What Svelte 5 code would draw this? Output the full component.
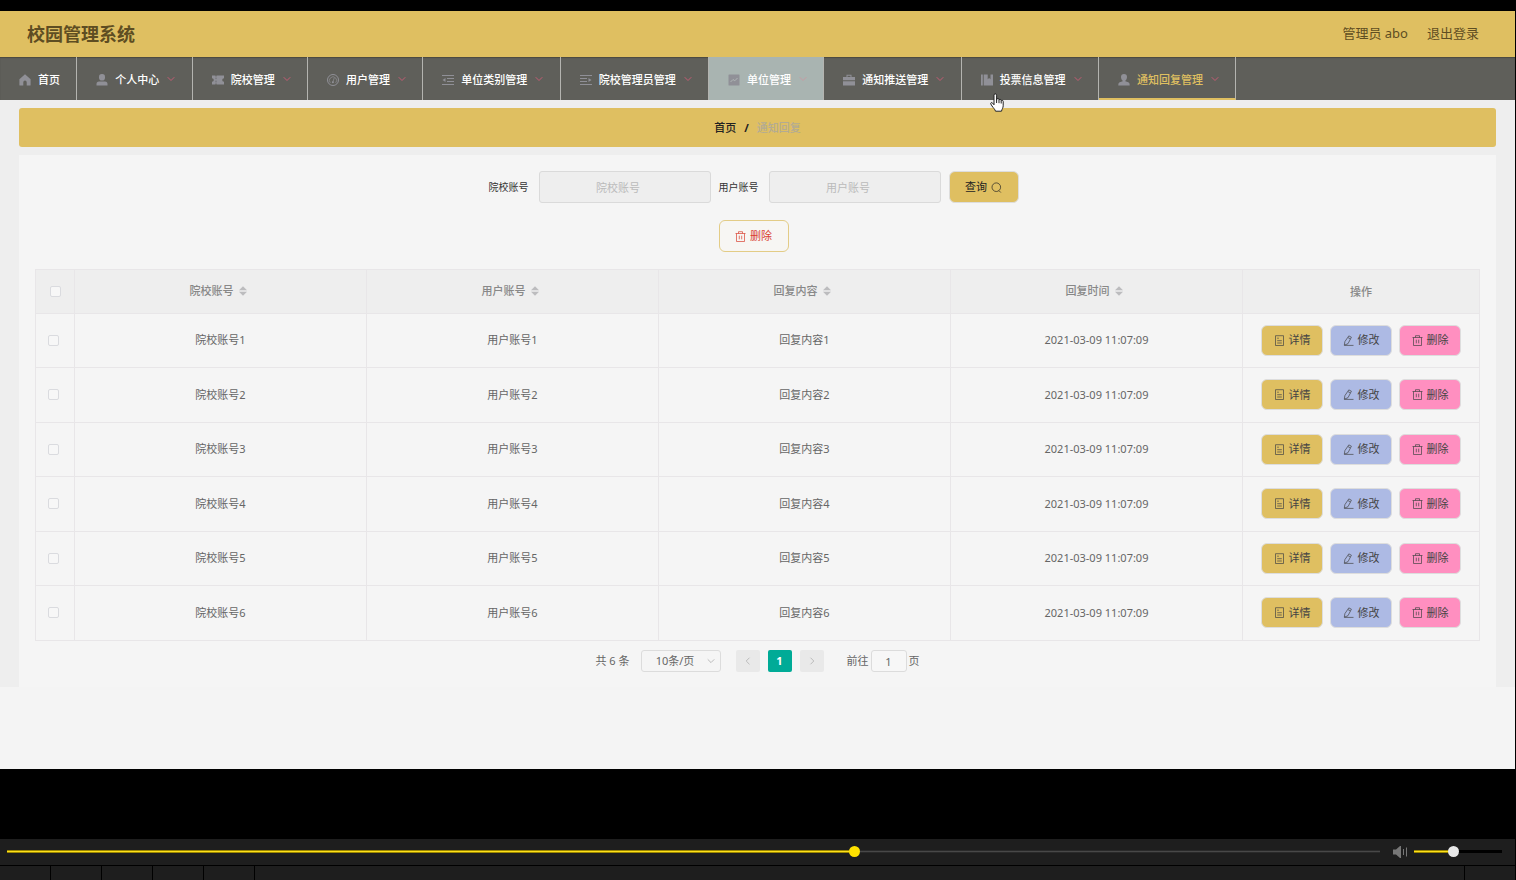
<script>
    const navItems = [
        { label: '首页', icon: 'home' },
        { label: '个人中心', icon: 'user', sub: true },
        { label: '院校管理', icon: 'ticket', sub: true },
        { label: '用户管理', icon: 'gauge', sub: true },
        { label: '单位类别管理', icon: 'fold', sub: true },
        { label: '院校管理员管理', icon: 'unfold', sub: true },
        { label: '单位管理', icon: 'chart', sub: true, hover: true },
        { label: '通知推送管理', icon: 'case', sub: true },
        { label: '投票信息管理', icon: 'book', sub: true },
        { label: '通知回复管理', icon: 'person', sub: true, active: true }
    ];

    const columns = ['院校账号', '用户账号', '回复内容', '回复时间'];

    let rows = $state(
        [1, 2, 3, 4, 5, 6].map((n) => ({
            id: n,
            school: '院校账号' + n,
            user: '用户账号' + n,
            content: '回复内容' + n,
            time: '2021-03-09 11:07:09',
            checked: false
        }))
    );

    let school = $state('');
    let user = $state('');
    let pageSize = $state('10');
    let page = $state('1');
    let progress = $state(61.8);
    let volume = $state(44);

    let allChecked = $derived(rows.length > 0 && rows.every((r) => r.checked));

    function toggleAll(e) {
        const value = e.currentTarget.checked;
        rows.forEach((r) => (r.checked = value));
    }
</script>

{#snippet navIcon(name)}
    <svg class="nav-icon" viewBox="0 0 12 12" aria-hidden="true">
        {#if name === 'home'}
            <path d="M6 .3 11.6 5.2V11a.6.6 0 0 1-.6.6H7.7V8.2a1.7 1.7 0 0 0-3.4 0v3.4H1a.6.6 0 0 1-.6-.6V5.2z" />
        {:else if name === 'user'}
            <rect x="3" y="0" width="6" height="6.6" rx="2.8" />
            <path d="M.5 11.5V10A2.5 2.5 0 0 1 3 7.5h6A2.5 2.5 0 0 1 11.5 10v1.5z" />
        {:else if name === 'ticket'}
            <path d="M0 1.500h3.500v1h1v-1H12v2.700a1.800 1.800 0 0 0 0 3.600v2.700H4.500v-1h-1v1H0V7.800a1.800 1.800 0 0 0 0-3.600z" />
            <path class="cut" d="M4 3.500v1.600M4 6.600v1.800" />
        {:else if name === 'gauge'}
            <circle class="line" cx="6" cy="6" r="5.500" />
            <path class="line thin" d="M3.300 8.800a3.600 3.600 0 1 1 5.400 0M7.200 4 5.800 8.300" />
            <circle cx="5.900" cy="8.300" r="1" />
        {:else if name === 'fold'}
            <path class="line" d="M0 1.500h12M5 4.500h7M5 7.500h7M0 10.500h12" />
            <path d="M.5 6 3.500 4v4z" />
        {:else if name === 'unfold'}
            <path class="line" d="M0 1.500h12M0 4.500h7M0 7.500h7M0 10.500h12" />
            <path d="M11.500 6 8.500 4v4z" />
        {:else if name === 'chart'}
            <rect x=".5" y=".5" width="11" height="11" rx=".5" />
            <path class="cut light" d="M2.500 8 5 5.500l1.800 1.300L9.500 4" />
        {:else if name === 'case'}
            <path d="M0 3h3.500V.8h5V3H12v3.300H0zM4.500 1.800V3h3V1.800zM0 7.200h12v4.300H0z" fill-rule="evenodd" />
        {:else if name === 'book'}
            <path d="M0 .5h1.800v11H0zM2.700.5h4v4.800l1.400-1.200 1.400 1.200V.5H12v11H2.700z" />
        {:else}
            <path d="M6 0a3 3 0 0 1 3 3.100c0 1.500-.7 3-1.700 3.600v.6l3 1c1 .4 1.400 1.400 1.400 3.200H.3c0-1.800.4-2.800 1.400-3.200l3-1v-.6C3.700 6.100 3 4.600 3 3.100A3 3 0 0 1 6 0z" />
        {/if}
    </svg>
{/snippet}

{#snippet icon(name)}
    <svg class="icon" viewBox="0 0 11 11" aria-hidden="true">
        {#if name === 'search'}
            <circle cx="5.300" cy="5.200" r="4.300" />
            <path d="M8 8.700 9.800 10.500" />
        {:else if name === 'trash'}
            <path d="M.5 2.500h10M3.500 2.500V.7h4v1.800M1.500 2.500v8h8v-8M4.300 4.700v3.600M6.700 4.700v3.600" />
        {:else if name === 'doc'}
            <path d="M1.500.7h8v9.800h-8zM3.200 3.200h1.600M3.200 5.700h4.600M3.200 8h4.600" />
        {:else}
            <path d="M5.800.9 8.400 2.200 5 8.700 1.300 10.200l.6-3.600zM5 2.600l2.400 1.300M1.300 10.400h9.200" />
        {/if}
    </svg>
{/snippet}

<div class="screen">
    <header class="topbar">
        <h1>校园管理系统</h1>
        <div class="account">
            <span>管理员 abo</span>
            <a href="#logout">退出登录</a>
        </div>
    </header>

    <nav>
        <ul>
            {#each navItems as item}
                <li class:hover={item.hover} class:active={item.active}>
                    <a href="#menu">
                        {@render navIcon(item.icon)}
                        <span>{item.label}</span>
                        {#if item.sub}
                            <svg class="arrow" viewBox="0 0 8 8" aria-hidden="true"><path d="M.7 1.200 4 4.500l3.300-3.300" /></svg>
                        {/if}
                    </a>
                </li>
            {/each}
        </ul>
        <svg class="pointer" viewBox="0 0 14 20" aria-hidden="true">
            <path d="M4 11.800V2.200a1.300 1.300 0 0 1 2.600 0v5l.2-.8a1.100 1.100 0 0 1 2.200.3v.7a1.100 1.100 0 0 1 2.200.2v.7a1 1 0 0 1 2 .2v4.300c0 2-1.200 3-1.700 5.400H5.500c-.5-2-2.400-3.400-3.500-5.200L.8 11c-.5-1 .7-1.900 1.600-1.100z" />
            <path d="M6.600 7v3M9 7.500v2.700M11.200 8.300v2.200" />
        </svg>
    </nav>

    <main>
        <div class="breadcrumb">
            <a href="#home">首页</a>
            <b>/</b>
            <span>通知回复</span>
        </div>

        <section class="card">
            <form onsubmit={(e) => e.preventDefault()}>
                <div class="form-row">
                    <label for="school">院校账号</label>
                    <input id="school" type="text" placeholder="院校账号" bind:value={school} />
                    <label for="user">用户账号</label>
                    <input id="user" type="text" placeholder="用户账号" bind:value={user} />
                    <button class="btn search">查询 {@render icon('search')}</button>
                </div>
                <div class="form-row">
                    <button type="button" class="btn remove">{@render icon('trash')} 删除</button>
                </div>
            </form>

            <table>
                <thead>
                    <tr>
                        <th class="check"><input type="checkbox" aria-label="全选" checked={allChecked} onchange={toggleAll} /></th>
                        {#each columns as col}
                            <th>
                                <span class="sortable">
                                    {col}
                                    <svg class="sort" viewBox="0 0 8 10" aria-hidden="true"><path d="M0 4.300 4 .3l4 4zM0 5.700h8l-4 4z" /></svg>
                                </span>
                            </th>
                        {/each}
                        <th class="ops">操作</th>
                    </tr>
                </thead>
                <tbody>
                    {#each rows as row (row.id)}
                        <tr>
                            <td class="check"><input type="checkbox" aria-label={row.school} bind:checked={row.checked} /></td>
                            <td>{row.school}</td>
                            <td>{row.user}</td>
                            <td>{row.content}</td>
                            <td>{row.time}</td>
                            <td>
                                <div class="actions">
                                    <button class="btn detail">{@render icon('doc')} 详情</button>
                                    <button class="btn edit">{@render icon('edit')} 修改</button>
                                    <button class="btn delete">{@render icon('trash')} 删除</button>
                                </div>
                            </td>
                        </tr>
                    {/each}
                </tbody>
            </table>

            <div class="pagination">
                <span>共 6 条</span>
                <div class="size">
                    <select aria-label="每页条数" bind:value={pageSize}>
                        <option value="10">10条/页</option>
                    </select>
                    <svg viewBox="0 0 8 8" aria-hidden="true"><path d="M.7 2.300 4 5.600l3.300-3.300" /></svg>
                </div>
                <div class="pager">
                    <button disabled aria-label="上一页"><svg viewBox="0 0 8 8" aria-hidden="true"><path d="M5.500.7 2.200 4l3.300 3.300" /></svg></button>
                    <button class="current">1</button>
                    <button disabled aria-label="下一页"><svg viewBox="0 0 8 8" aria-hidden="true"><path d="M2.500.7 5.800 4 2.500 7.300" /></svg></button>
                </div>
                <label class="jump">前往 <input type="text" bind:value={page} /> 页</label>
            </div>
        </section>
    </main>

    <footer class="player">
        <div class="controls">
            <input class="seek" type="range" min="0" max="100" step="0.1" aria-label="播放进度" bind:value={progress} style="--value: {progress}%" />
            <svg class="speaker" viewBox="0 0 16 14" aria-hidden="true">
                <path d="M1 4.500h3L8 1h1v12H8L4 9.500H1z" />
                <path class="wave" d="M11.500 4v6M14.500 2.500v9" />
            </svg>
            <input class="volume" type="range" min="0" max="100" aria-label="音量" bind:value={volume} style="--value: {volume}%" />
        </div>
        <div class="strip">
            <i></i><i></i><i></i><i></i><i></i>
            <i class="last"></i>
        </div>
    </footer>
</div>

<style>
    :global(body) {
        margin: 0;
        background: #000;
    }

    .screen {
        --gold: #dfbf61;
        display: flex;
        flex-direction: column;
        min-height: 100vh;
        box-sizing: border-box;
        padding: 11px 1px 0 0;
        background: #000;
        color: #666;
        font-family: 'Noto Sans', 'Noto Sans CJK SC', sans-serif;
        font-size: 11px;
        line-height: 16px;
    }

    a {
        color: inherit;
        text-decoration: none;
    }

    button,
    input,
    select {
        box-sizing: border-box;
        margin: 0;
        font: inherit;
        color: inherit;
    }

    svg {
        flex: none;
    }

    .topbar {
        display: flex;
        align-items: center;
        justify-content: space-between;
        height: 46px;
        padding: 0 36px 0 27px;
        background: var(--gold);
        color: #5e4d22;
    }

    h1 {
        margin: 0;
        font-size: 18px;
        line-height: 24px;
        font-weight: 700;
    }

    .account {
        display: flex;
        gap: 19px;
        padding-bottom: 2px;
        font-size: 13px;
        line-height: 20px;
    }

    nav {
        position: relative;
        background: #5f5f5a;
        box-shadow: inset 0 1px 1px #4c4a40;
    }

    ul {
        display: flex;
        width: 81.6%;
        margin: 0;
        padding: 0;
        list-style: none;
    }

    li {
        flex: 1 0 auto;
        box-sizing: border-box;
        height: 43px;
        border-right: 1px solid #b4b4b0;
        color: #fff;
    }

    li.hover {
        background: #a9b4b1;
    }

    li.active {
        border-bottom: 2px solid var(--gold);
        color: var(--gold);
    }

    li a {
        display: flex;
        align-items: center;
        height: 43px;
        padding: 3px 16px 0 19px;
        box-sizing: border-box;
        white-space: nowrap;
        font-weight: 500;
    }

    .nav-icon {
        width: 12px;
        height: 12px;
        margin-right: 7px;
        fill: #909097;
    }

    .nav-icon .line {
        fill: none;
        stroke: #909097;
    }

    .nav-icon .thin {
        stroke-width: 0.7;
    }

    .nav-icon .cut {
        fill: none;
        stroke: #6d6d70;
    }

    .nav-icon .light {
        stroke: #b0b6b6;
    }

    .arrow {
        width: 8px;
        height: 8px;
        margin-left: 8px;
        fill: none;
        stroke: #c45c74;
    }

    .hover .arrow {
        stroke: #c79aa2;
    }

    .pointer {
        position: absolute;
        left: 990px;
        top: 36px;
        width: 14px;
        height: 20px;
        fill: #fff;
        stroke: #222;
    }

    main {
        padding: 8px 19px 82px;
        background: linear-gradient(#eee 587px, #f4f4f4 587px);
    }

    .breadcrumb {
        display: flex;
        justify-content: center;
        align-items: center;
        gap: 8px;
        height: 39px;
        border-radius: 3px;
        background: var(--gold);
        color: #222;
        font-weight: 500;
    }

    .breadcrumb span {
        color: #b3ab93;
    }

    .card {
        margin-top: 8px;
        padding: 16px 16px 15px;
        background: #f5f5f5;
    }

    form {
        display: flex;
        flex-direction: column;
        gap: 17px;
        padding: 0 8px 17px 0;
    }

    .form-row {
        display: flex;
        align-items: center;
        justify-content: center;
        height: 32px;
    }

    .form-row label {
        margin-right: 10px;
        font-size: 10px;
        color: #333;
    }

    .form-row input {
        width: 172px;
        height: 32px;
        margin-right: 8px;
        padding: 0 13px 0 0;
        border: 1px solid #dadada;
        border-radius: 3px;
        background: #eee;
        text-align: center;
    }

    .form-row input::placeholder {
        color: #bbb;
    }

    .btn {
        display: flex;
        align-items: center;
        justify-content: center;
        gap: 4px;
        width: 62px;
        height: 31px;
        padding: 0;
        border: 1px solid #ddd;
        border-radius: 6px;
        color: #444;
        cursor: pointer;
    }

    .icon {
        width: 11px;
        height: 11px;
        fill: none;
        stroke: currentColor;
        stroke-width: 0.7;
    }

    .search,
    .remove {
        width: 70px;
        height: 32px;
    }

    .search {
        background: var(--gold);
        color: #222;
    }

    .remove {
        border-color: #e3cc86;
        background: #f7f6f3;
        color: #d9402f;
    }

    .detail {
        background: var(--gold);
    }

    .edit {
        background: #adbae4;
    }

    .delete {
        background: #ff8fc0;
    }

    table {
        width: 100%;
        table-layout: fixed;
        border-collapse: collapse;
        text-align: center;
    }

    th,
    td {
        box-sizing: border-box;
        padding: 0;
        border: 1px solid #e8e6e8;
    }

    th {
        height: 44px;
        background: #eee;
        color: #888;
        font-weight: 500;
    }

    td {
        height: 54px;
        padding-bottom: 1px;
    }

    tr:nth-child(even) td {
        height: 55px;
    }

    .check {
        width: 39px;
    }

    td.check {
        padding-right: 3px;
    }

    .ops {
        width: 237px;
    }

    .sortable {
        display: inline-flex;
        align-items: center;
        gap: 5px;
        padding: 0 5px 2px 0;
    }

    .sort {
        width: 8px;
        height: 10px;
        fill: #bcbcbe;
    }

    .check input {
        display: block;
        width: 11px;
        height: 11px;
        margin: 0 auto;
        appearance: none;
        border: 1px solid #dadbdf;
        border-radius: 2px;
        background: #f7f7f7;
    }

    .check input:checked {
        background: #00ab97;
    }

    .actions {
        display: flex;
        justify-content: center;
        gap: 7px;
    }

    .pagination {
        display: flex;
        align-items: center;
        justify-content: center;
        height: 22px;
        margin-top: 9px;
    }

    .pagination svg {
        width: 8px;
        height: 8px;
        fill: none;
        stroke: #bbb;
    }

    .size {
        position: relative;
        margin: 0 15px 0 11px;
    }

    .size select {
        display: block;
        width: 80px;
        height: 22px;
        padding: 0 11px 0 0;
        appearance: none;
        border: 1px solid #dcdcdc;
        border-radius: 3px;
        background: #f5f5f5;
        text-align: center;
        text-align-last: center;
    }

    .size svg {
        position: absolute;
        right: 6px;
        top: 7px;
        pointer-events: none;
    }

    .pager {
        display: flex;
        gap: 8px;
    }

    .pager button {
        display: flex;
        align-items: center;
        justify-content: center;
        width: 24px;
        height: 22px;
        padding: 0;
        border: 0;
        border-radius: 2px;
        background: #e9e9e9;
    }

    .pager .current {
        background: #00ab97;
        color: #fff;
        font-weight: 700;
    }

    .jump {
        display: flex;
        align-items: center;
        gap: 2px;
        margin-left: 23px;
    }

    .jump input {
        width: 36px;
        height: 22px;
        padding: 0;
        border: 1px solid #dcdcdc;
        border-radius: 3px;
        background: #f7f7f7;
        text-align: center;
    }

    .player {
        margin-top: auto;
        background: #1e1e1e;
    }

    .controls {
        display: flex;
        align-items: center;
        height: 26px;
        box-sizing: border-box;
        padding: 0 13px 1px 7px;
    }

    input[type='range'] {
        height: 11px;
        appearance: none;
        background: none;
    }

    input[type='range']::-webkit-slider-runnable-track {
        height: 3px;
        background:
            linear-gradient(#9c8700 1px, #ffe11a 1px 2px, #9c8700 2px) 0 0 / var(--value) 100% no-repeat,
            var(--rest);
    }

    input[type='range']::-webkit-slider-thumb {
        width: 11px;
        height: 11px;
        margin-top: -4px;
        appearance: none;
        border-radius: 50%;
        background: var(--thumb);
    }

    .seek {
        --rest: linear-gradient(#2a2a2a 1px, #484848 1px 2px, #2a2a2a 2px);
        --thumb: #ffe100;
        flex: 1;
    }

    .volume {
        --rest: #000;
        --thumb: #e8e8e8;
        width: 88px;
    }

    .speaker {
        width: 16px;
        height: 14px;
        margin: 0 6px 0 12px;
        fill: #777;
    }

    .speaker .wave {
        fill: none;
        stroke: #777;
    }

    .strip {
        display: flex;
        height: 14px;
        border-top: 1px solid #000;
    }

    .strip i {
        width: 50px;
        border-right: 1px solid #000;
    }

    .strip .last {
        margin-left: auto;
        border-right: 0;
        border-left: 1px solid #000;
    }
</style>
